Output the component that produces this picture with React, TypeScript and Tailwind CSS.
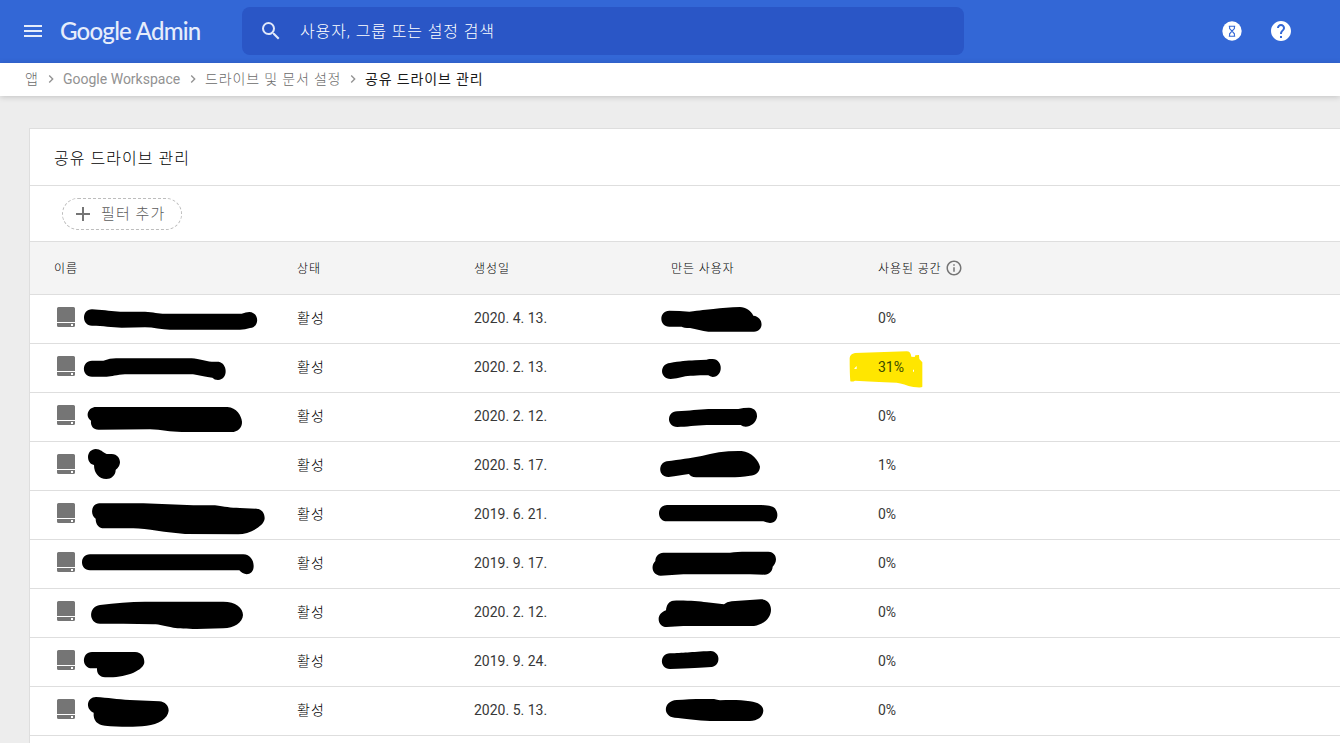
import { Fragment } from 'react';
import { MdChevronRight, MdHelp, MdInfoOutline, MdMenu, MdSearch } from 'react-icons/md';

type Drive = {
    created: string;
    used: string;
    nameMark: string;
    ownerMark: string;
    highlighted?: boolean;
};

const crumbs = [
    { label: '앱', className: 'w-[14px] font-light text-[#6b6b6b]' },
    { label: 'Google Workspace', className: 'w-[118px]' },
    { label: '드라이브 및 문서 설정', className: 'w-[136px] font-light tracking-[0.85px] text-[#6b6b6b]' },
];

/* Scribbled-out names, drawn at 3 units per pixel */
const drives: Drive[] = [
    {
        created: '2020. 4. 13.',
        used: '0%',
        nameMark: 'M186 43L205 44C235 46 255 50 280 50L345 50C370 51 385 56 405 56H635Q648 51 658 51C688 52 690 96 660 99Q645 104 630 104H420C395 104 370 97 345 97L275 98C245 97 220 92 186 92C154 92 154 43 186 43Z',
        ownerMark: 'M88 47Q120 47 148 50C180 47 200 43 220 42C245 39 270 36 300 36C317 37 333 47 340 62C372 65 373 109 342 110H205C185 109 170 102 150 99Q130 99 125 95H88C56 95 56 47 88 47Z',
    },
    {
        created: '2020. 2. 13.',
        used: '31%',
        highlighted: true,
        nameMark: 'M186 50H220Q240 43 258 43H485C510 44 525 53 545 53Q562 53 566 53C592 57 597 105 564 108Q553 108 547 101C520 99 505 91 480 91H285C260 92 245 98 230 98H186C154 98 154 50 186 50Z',
        ownerMark: 'M90 57C120 52 140 50 165 49L200 47C205 45 212 45 218 45C250 46 251 98 218 99Q210 98 205 94C170 94 145 96 130 98Q110 104 92 105C58 104 58 60 90 57Z',
    },
    {
        created: '2020. 2. 12.',
        used: '0%',
        nameMark: 'M198 42H592C620 44 634 68 636 86C637 104 622 117 605 117H455C420 117 395 110 360 109L206 110C190 110 181 98 183 83C164 70 174 42 198 42Z',
        ownerMark: 'M111 55C150 53 175 49 205 48H295Q310 44 327 44C345 45 352 58 351 71C349 88 332 101 317 101Q308 101 302 96H200C165 98 140 101 112 102C79 102 79 56 111 55Z',
    },
    {
        created: '2020. 5. 17.',
        used: '1%',
        nameMark: 'M197 21C212 21 218 31 230 36H245C262 36 270 50 270 61C269 74 262 79 257 84C257 101 243 111 229 111C207 111 192 94 192 69C180 67 174 56 174 45C174 32 184 21 197 21Z',
        ownerMark: 'M80 58C120 53 150 48 185 42C220 32 260 26 305 27C335 29 357 58 360 74C359 92 347 99 330 101C310 104 290 106 270 106H168C156 106 150 101 147 96C125 99 110 102 86 105C54 106 53 63 80 58Z',
    },
    {
        created: '2019. 6. 21.',
        used: '0%',
        nameMark: 'M208 37H340L490 43H555C585 47 600 51 630 51L680 53C696 54 704 67 704 82C703 107 655 130 625 130L465 129C410 125 350 113 310 112H222C207 112 197 101 197 83C179 71 184 38 208 37Z',
        ownerMark: 'M81 42H355C375 42 385 44 393 46C418 50 420 96 390 96Q378 95 370 91H81C49 91 49 42 81 42Z',
    },
    {
        created: '2019. 9. 17.',
        used: '0%',
        nameMark: 'M180 43H640C660 44 671 60 671 78C671 108 640 108 628 91H180C148 91 148 43 180 43Z',
        ownerMark: 'M70 38H270C285 36 300 35 320 35H385C402 36 408 48 408 58C408 68 403 75 398 80C397 94 388 102 374 104L330 103H130L62 107C36 106 31 77 46 63C46 49 56 39 70 38Z',
    },
    {
        created: '2020. 2. 12.',
        used: '0%',
        nameMark: 'M210 48C255 43 300 38 345 38H580C617 38 639 56 639 78C638 100 612 118 580 118L500 120C470 119 445 118 430 116C405 112 390 106 370 106L280 104H210C175 104 174 52 210 48Z',
        ownerMark: 'M100 35C145 34 175 37 200 40L252 46Q260 38 275 37L362 31C382 31 393 44 393 62C393 88 368 108 342 111H130L80 114C53 114 44 76 78 64C79 48 87 36 100 35Z',
    },
    {
        created: '2019. 9. 24.',
        used: '0%',
        nameMark: 'M186 42H315C335 42 343 58 343 73C342 96 292 118 240 118H225C208 117 200 106 201 91H186C154 91 154 42 186 42Z',
        ownerMark: 'M90 46C130 45 150 42 212 39C243 41 243 84 214 87C185 88 150 92 90 93C58 93 58 47 90 46Z',
    },
    {
        created: '2020. 5. 13.',
        used: '0%',
        nameMark: 'M198 30C235 32 260 37 300 39L388 43C405 45 416 55 416 71C414 94 385 112 350 116C310 121 262 119 225 116C202 114 189 100 191 77C165 66 170 30 198 30Z',
        ownerMark: 'M110 39C140 36 180 35 222 36Q232 38 240 40C275 38 305 39 330 43C355 46 370 56 370 71C369 90 352 101 330 102H210C175 100 130 94 104 92C68 89 68 42 110 39Z',
    },
];

function HourglassIcon() {
    return (
        <svg viewBox="0 0 20 20" className="size-5">
            <circle cx="10" cy="10" r="9.7" fill="#fff" />
            <path
                d="M6.8 5.2h6.4M6.8 15.2h6.4M7.6 5.2v2.3L10 10.1l2.4-2.6V5.2M7.6 15.2v-2.4L10 10.1l2.4 2.7v2.4"
                fill="none"
                stroke="#3367d6"
                strokeWidth="1.1"
            />
        </svg>
    );
}

function PlusIcon() {
    return (
        <svg viewBox="0 0 14 14" className="size-[14px]" fill="#757575">
            <path d="M6 0h2v6h6v2H8v6H6V8H0V6h6Z" />
        </svg>
    );
}

function DriveIcon() {
    return (
        <svg viewBox="0 0 18 20" className="mt-3 h-5 w-[18px] shrink-0" fill="#757575">
            <path d="M1.5 0h15A1.5 1.5 0 0 1 18 1.500V15H0V1.500A1.500 1.500 0 0 1 1.500 0Z" />
            <path fillRule="evenodd" d="M0 16h18v2.500a1.500 1.500 0 0 1-1.500 1.500h-15A1.500 1.500 0 0 1 0 18.500ZM14 17v2h2v-2Z" />
        </svg>
    );
}

function Highlight() {
    return (
        <svg viewBox="600 0 270 144" className="absolute top-0 -left-[38px] h-12 w-[90px]">
            <path
                fill="#ffe600"
                d="M645 27L800 22Q812 22 814 38L824 39L826 34L837 33L838 45L847 55V128Q846 132 820 129C800 125 785 117 770 116C720 115 680 111 645 110Q638 114 631 112Q629 90 629 42Q630 30 645 27Z"
            />
            <path fill="#fff" d="M642 74l8-8v9ZM819 77h3v6h-3Z" />
        </svg>
    );
}

export default function App() {
    return (
        <div className="flex h-[743px] w-full flex-col overflow-hidden bg-[#ededed] font-['Roboto','Noto_Sans_CJK_KR',sans-serif] text-[#212121]">
            {/* ── Top bar ── */}
            <header className="flex h-[63px] shrink-0 items-center bg-[#3367d6] pr-[47px] pb-px pl-[21px] text-white">
                <MdMenu size={24} className="text-[#e6edfb]" />
                <span className="ml-[15px] w-[182px] font-['Lato',sans-serif] text-[24px] leading-none font-medium tracking-[-0.75px] whitespace-nowrap text-[#e6edfb]">
                    Google Admin
                </span>
                <div className="flex h-12 w-[722px] items-center rounded-lg bg-[#2a56c6] pl-[17px]">
                    <MdSearch size={24} className="text-[#e0e8fa]" />
                    <span className="ml-[17px] pt-px text-base font-light tracking-[0.9px] text-white">사용자, 그룹 또는 설정 검색</span>
                </div>
                <div className="ml-auto flex items-center gap-[27px]">
                    <HourglassIcon />
                    <MdHelp size={24} />
                </div>
            </header>

            {/* ── Breadcrumbs ── */}
            <nav className="z-10 flex h-[33px] shrink-0 items-center bg-white pb-px pl-[25px] text-sm whitespace-nowrap text-[#929292] shadow-[0_1px_6px_rgba(0,0,0,0.18)]">
                {crumbs.map(({ label, className }) => (
                    <Fragment key={label}>
                        <span className={className}>{label}</span>
                        <MdChevronRight size={16} className="mx-1" />
                    </Fragment>
                ))}
                <span className="tracking-[0.85px] text-[#1a1a1a]">공유 드라이브 관리</span>
            </nav>

            {/* ── Shared drive table ── */}
            <main className="mt-8 ml-[29px] flex-1 border-t border-l border-[#dedede] bg-white">
                <h1 className="flex h-[57px] items-center border-b border-[#dedede] pt-[3px] pl-6 text-base font-light tracking-[1.05px] text-black">
                    공유 드라이브 관리
                </h1>
                <div className="flex h-14 items-center border-b border-[#dedede] pl-8">
                    <button className="flex h-8 w-[120px] items-center rounded-full border border-dashed border-[#bdbdbd] pl-[13px] text-[15px] text-[#5c5c5c]">
                        <PlusIcon />
                        <span className="ml-[11px] pt-px font-light tracking-[1.1px]">필터 추가</span>
                    </button>
                </div>
                <div className="grid h-[53px] grid-cols-[267px_177px_197px_207px_1fr] items-center border-b border-[#dedede] bg-[#f4f4f4] pt-px text-xs font-light tracking-[0.9px] text-black">
                    <span className="pl-6">이름</span>
                    <span>상태</span>
                    <span>생성일</span>
                    <span>만든 사용자</span>
                    <span className="flex items-center gap-[3px]">
                        사용된 공간
                        <MdInfoOutline size={18} className="-mt-px text-[#757575]" />
                    </span>
                </div>
                {drives.map((drive, i) => (
                    <div
                        key={i}
                        className="grid h-[49px] grid-cols-[267px_177px_197px_207px_1fr] items-center border-b border-[#dedede] text-sm"
                    >
                        <div className="flex h-12 gap-[5px] pl-[27px]">
                            <DriveIcon />
                            <svg viewBox="150 0 600 144" className="h-12 w-[200px]">
                                <path d={drive.nameMark} />
                            </svg>
                        </div>
                        <span className="pb-0.5 font-light tracking-[1.2px] text-black">활성</span>
                        <span className="pb-0.5 text-[#383838]">{drive.created}</span>
                        <svg viewBox="30 0 420 144" className="-ml-[21px] h-12 w-[140px]">
                            <path d={drive.ownerMark} />
                        </svg>
                        <div className="relative flex h-12 items-center pb-0.5 text-[#383838]">
                            {drive.highlighted && <Highlight />}
                            <span className={drive.highlighted ? 'relative text-[#3b4a00]' : 'relative'}>{drive.used}</span>
                        </div>
                    </div>
                ))}
            </main>
        </div>
    );
}
